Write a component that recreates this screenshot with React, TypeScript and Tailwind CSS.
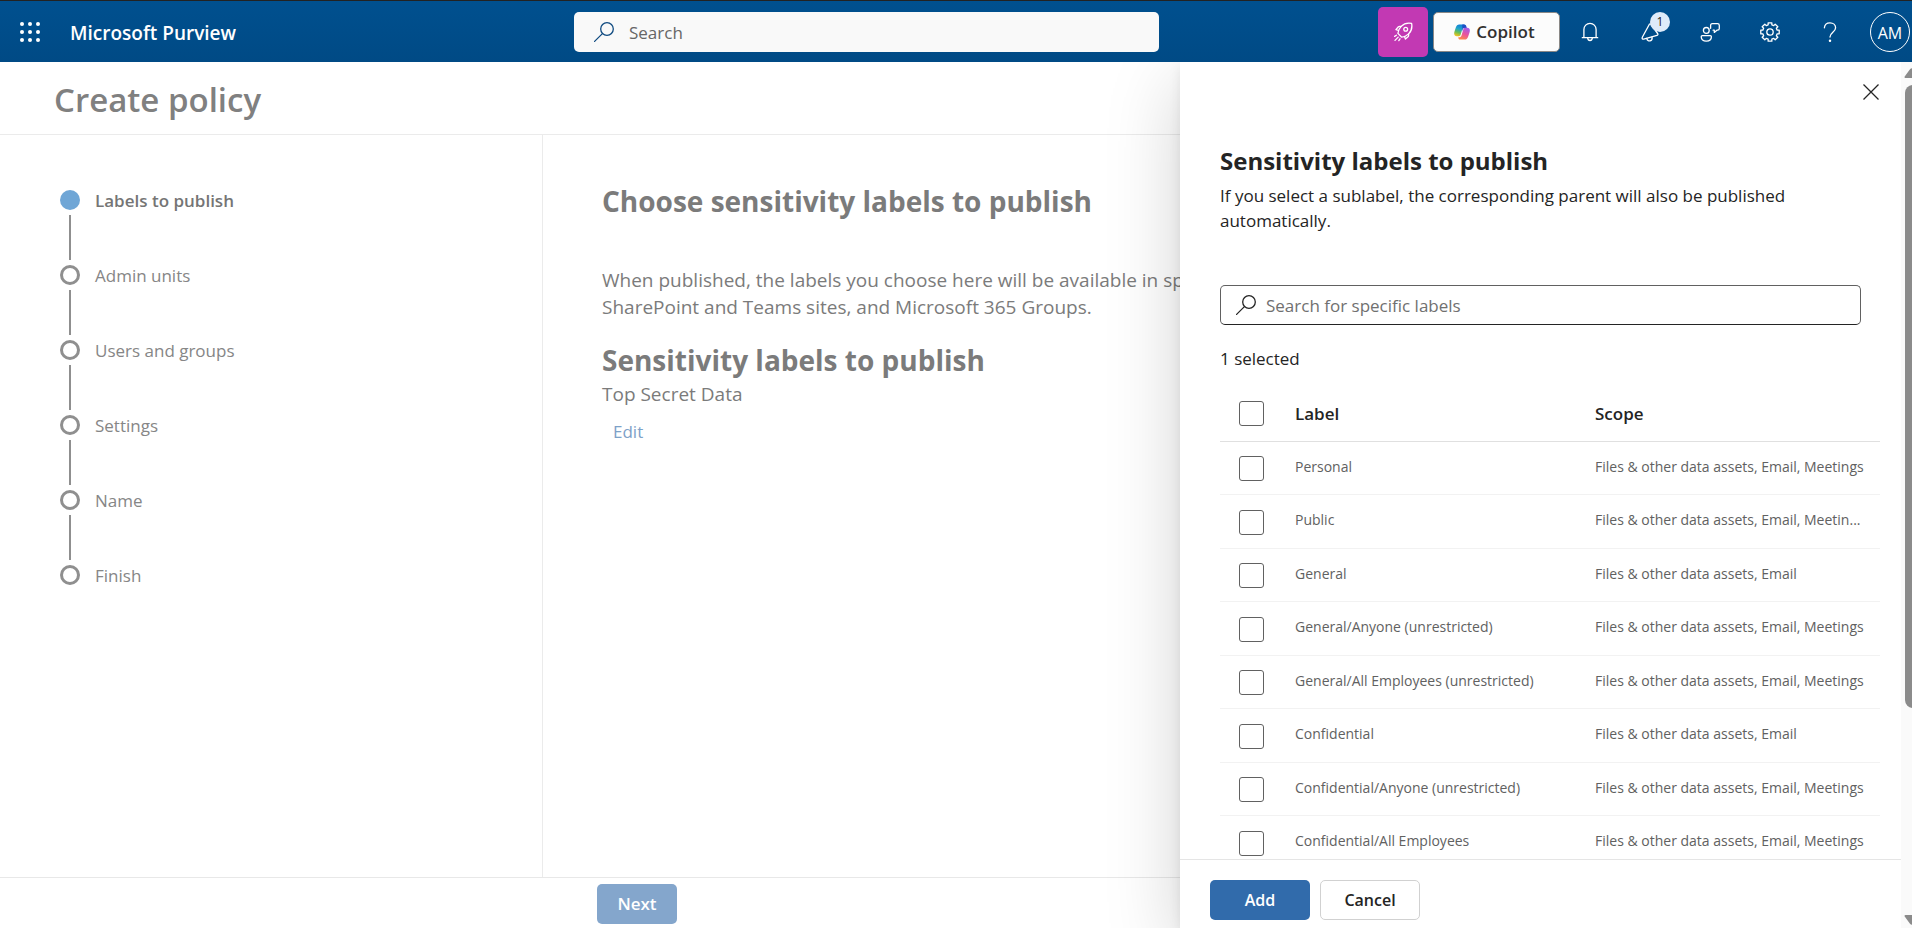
import type { ReactNode } from "react";

const steps = ["Labels to publish", "Admin units", "Users and groups", "Settings", "Name", "Finish"];

const full = "Files & other data assets, Email, Meetings";
const short = "Files & other data assets, Email";

const labels = [
  { name: "Personal", scope: full },
  { name: "Public", scope: "Files & other data assets, Email, Meetin..." },
  { name: "General", scope: short },
  { name: "General/Anyone (unrestricted)", scope: full },
  { name: "General/All Employees (unrestricted)", scope: full },
  { name: "Confidential", scope: short },
  { name: "Confidential/Anyone (unrestricted)", scope: full },
  { name: "Confidential/All Employees", scope: full },
];

function Icon({ children, className = "size-5" }: { children: ReactNode; className?: string }) {
  return (
    <svg
      viewBox="0 0 20 20"
      className={className}
      fill="none"
      stroke="currentColor"
      strokeWidth="1.3"
      strokeLinecap="round"
      strokeLinejoin="round"
      aria-hidden="true"
    >
      {children}
    </svg>
  );
}

function SearchIcon({ className }: { className?: string }) {
  return (
    <Icon className={className}>
      <circle cx="13" cy="7" r="6.3" />
      <path d="M8.4 11.6.6 19.4" />
    </Icon>
  );
}

function WaffleIcon() {
  return (
    <svg viewBox="0 0 20 20" className="size-5" fill="currentColor" aria-hidden="true">
      {[2, 10, 18].map((y) => [2, 10, 18].map((x) => <circle key={`${x}-${y}`} cx={x} cy={y} r="2" />))}
    </svg>
  );
}

function RocketIcon() {
  return (
    <Icon>
      <path d="M18.6 1.4c-4-.8-7.7.2-10.4 3C6.2 6.4 5.1 9 4.9 11.4l3.8 3.8c2.4-.3 5-1.4 6.9-3.3 2.8-2.8 3.8-6.5 3-10.5z" />
      <circle cx="12.7" cy="7.3" r="1.9" />
      <path d="M8.2 4.4H6.6c-.6 0-1 .2-1.4.6L2.9 7.6l2.7.9M15.6 11.9v1.5c0 .6-.2 1-.6 1.4l-2.6 2.3-.9-2.7" />
      <path d="M3.4 13.2 1.6 14.4M5.2 15.1 2 18.4M7 16.8l-1.2 1.8" />
    </Icon>
  );
}

function CopilotIcon() {
  return (
    <svg viewBox="0 0 16 16" className="size-4" aria-hidden="true">
      <defs>
        <linearGradient id="cp-left" x1="0.6" y1="0" x2="0.3" y2="1">
          <stop offset="0" stopColor="#0f7bdc" />
          <stop offset="0.4" stopColor="#21a5c8" />
          <stop offset="0.7" stopColor="#6cbf54" />
          <stop offset="1" stopColor="#f2c21c" />
        </linearGradient>
        <linearGradient id="cp-right" x1="0.7" y1="0" x2="0.3" y2="1">
          <stop offset="0" stopColor="#a35bea" />
          <stop offset="0.5" stopColor="#e8529f" />
          <stop offset="1" stopColor="#ff8a48" />
        </linearGradient>
      </defs>
      <path d="M10 .4H5.3C3.4.4 2.5 1.5 1.8 3.5L.5 7.6C-.4 10.5.5 12.2 2.8 12.2h1.9c1.1 0 1.7-.6 2-1.7l1.8-6c.4-1.2 1-1.8 2.2-1.8h1C11.5 1.4 11 .4 10 .4z" fill="url(#cp-left)" />
      <path d="M8.3.4h1.9c1.2 0 1.8.7 2.1 1.8l.5 1.7h-2.2c-.9 0-1.4.4-1.7 1.3l-.7 2.4z" fill="#1b4fc4" />
      <path d="M6 15.600h4.700c1.900 0 2.800-1.100 3.500-3.100l1.300-4.100c.9-2.900 0-4.600-2.300-4.600h-1.900c-1.100 0-1.700.6-2 1.700l-1.800 6c-.4 1.200-1 1.800-2.200 1.800h-1c-.1 1.300.6 2.300 1.700 2.300z" fill="url(#cp-right)" />
    </svg>
  );
}

function BellIcon() {
  return (
    <Icon>
      <path d="M2.3 15.7h15.4M3.9 15.5V7.6C3.9 4 6.6 1.4 10 1.4s6.1 2.6 6.1 6.2v7.9" />
      <path d="M7.7 16.2c.2 1.5 1.1 2.3 2.3 2.3s2.1-.8 2.3-2.3" />
    </Icon>
  );
}

function MegaphoneIcon() {
  return (
    <Icon>
      <path d="M9.4 2.2 2.3 15.3c-.6 1.1.2 2.1 1.4 1.8L17 13.4c1-.3 1.2-1.2.6-1.900L11 2.300c-.5-.6-1.200-.7-1.600-.1z" />
      <path d="M6.800 16.500c.4 1.800 1.700 2.700 3.300 2.300 1.600-.4 2.300-1.800 1.900-3.700" />
    </Icon>
  );
}

function FeedbackIcon() {
  return (
    <Icon>
      <circle cx="6.3" cy="8.4" r="2.9" />
      <path d="M1.2 14.8c0-.7.4-1.1 1.1-1.1h8c.7 0 1.1.4 1.1 1.1 0 2.7-2 4.3-5.1 4.3s-5.1-1.6-5.1-4.3z" />
      <path d="M10.6 6.3V3.4c0-1 .6-1.7 1.7-1.7h5.3c1.1 0 1.7.7 1.7 1.7v3.1c0 1-.6 1.7-1.7 1.7h-.7l-2.6 2.2V8.2h-1.2" />
    </Icon>
  );
}

const gearPoints = Array.from({ length: 8 }, (_, i) => {
  const base = (i * Math.PI) / 4;
  return [
    [-0.25, 7.4],
    [-0.2, 9.4],
    [0.2, 9.4],
    [0.25, 7.4],
  ]
    .map(([a, r]) => `${(10 + r * Math.sin(base + a)).toFixed(2)},${(10 - r * Math.cos(base + a)).toFixed(2)}`)
    .join(" ");
}).join(" ");

function GearIcon() {
  return (
    <Icon>
      <polygon points={gearPoints} />
      <circle cx="10" cy="10" r="3.2" />
    </Icon>
  );
}

function HelpIcon() {
  return (
    <Icon>
      <path d="M4.4 5.8C4.6 2.8 6.9.8 10 .8s5.6 2.1 5.6 5c0 4.3-5.6 4.7-5.6 9.2" />
      <circle cx="10" cy="18.7" r="0.6" fill="currentColor" />
    </Icon>
  );
}

function HeaderButton({ label, children }: { label: string; children: ReactNode }) {
  return (
    <button type="button" aria-label={label} className="relative flex h-10 w-[60px] items-center justify-center">
      {children}
    </button>
  );
}

function Header() {
  return (
    <header className="flex h-[62px] shrink-0 items-center border-t border-[#222] bg-linear-to-b from-[#00508f] to-[#004a85] pr-0.5 text-white">
      <div className="flex w-[574px] shrink-0 items-center gap-[30px] pl-5">
        <button type="button" aria-label="App launcher">
          <WaffleIcon />
        </button>
        <span className="pt-1 text-[19px] font-semibold">Microsoft Purview</span>
      </div>
      <label className="flex h-10 w-[585px] items-center gap-[15px] rounded-[5px] bg-[#f9f9f9] px-5 text-[#0f4a80]">
        <SearchIcon className="size-5 shrink-0" />
        <input
          type="search"
          aria-label="Search"
          placeholder="Search"
          className="w-full bg-transparent pt-0.5 text-[17px] text-[#333] outline-none placeholder:text-[#666]"
        />
      </label>
      <div className="ml-auto flex items-center">
        <button
          type="button"
          aria-label="What's new"
          className="mr-[5px] flex size-[50px] items-center justify-center rounded-[5px] bg-[#c239b3]"
        >
          <RocketIcon />
        </button>
        <button
          type="button"
          className="flex h-10 w-[127px] items-center justify-center gap-1.5 rounded-[5px] border border-[#8a8886] bg-[#fcfcfc] pr-1 text-[17px] font-semibold text-[#323130]"
        >
          <CopilotIcon />
          Copilot
        </button>
        <HeaderButton label="Notifications">
          <BellIcon />
        </HeaderButton>
        <HeaderButton label="Announcements">
          <MegaphoneIcon />
          <span className="absolute top-0 left-[30px] flex size-5 items-center justify-center rounded-full bg-[#deebfa] text-[12px] text-[#242424]">
            1
          </span>
        </HeaderButton>
        <HeaderButton label="Feedback">
          <FeedbackIcon />
        </HeaderButton>
        <HeaderButton label="Settings">
          <GearIcon />
        </HeaderButton>
        <HeaderButton label="Help">
          <HelpIcon />
        </HeaderButton>
        <button
          type="button"
          aria-label="Account"
          className="ml-2.5 flex size-10 items-center justify-center rounded-full border border-white pt-0.5 text-[16px]"
        >
          AM
        </button>
      </div>
    </header>
  );
}

function Steps() {
  return (
    <nav aria-label="Wizard steps" className="w-[543px] shrink-0 border-r border-[#ebebeb] pt-[55px] pl-[60px]">
      <ol>
        {steps.map((step, i) => (
          <li key={step}>
            {i > 0 && <div className="my-[5px] ml-[9px] h-[45px] w-0.5 bg-[#8f8f8f]" />}
            <div className="flex h-5 items-center gap-[15px]">
              <span
                className={
                  i === 0
                    ? "size-5 rounded-full bg-[#6fa6d6]"
                    : "size-5 rounded-full border-[3px] border-[#8f8f8f]"
                }
              />
              <span
                className={
                  i === 0
                    ? "pt-0.5 text-[17px] font-semibold text-[#757575]"
                    : "pt-0.5 text-[17px] text-[#868686]"
                }
              >
                {step}
              </span>
            </div>
          </li>
        ))}
      </ol>
    </nav>
  );
}

function Checkbox({ label, id }: { label: string; id: string }) {
  return (
    <input
      id={id}
      type="checkbox"
      aria-label={label}
      className="block size-[25px] appearance-none rounded-[3px] border border-[#616161] bg-white"
    />
  );
}

function Panel() {
  return (
    <aside
      role="dialog"
      aria-label="Sensitivity labels to publish"
      className="absolute inset-y-0 right-0 flex w-[732px] bg-white text-[#242424] shadow-[0_20px_70px_rgba(0,0,0,0.18),0_4px_12px_rgba(0,0,0,0.08)]"
    >
      <div className="flex min-w-0 flex-1 flex-col">
        <div className="flex min-h-0 flex-1 flex-col overflow-hidden pl-10">
          <button type="button" aria-label="Close" className="mt-5 mr-5 self-end">
            <svg viewBox="0 0 20 20" className="size-5" stroke="currentColor" strokeWidth="1.3" aria-hidden="true">
              <path d="M2.5 2.5l15 15M17.5 2.5l-15 15" />
            </svg>
          </button>
          <h2 className="mt-11 text-[24px] leading-[30px] font-bold">Sensitivity labels to publish</h2>
          <p className="mt-[7px] mr-10 text-[17px] leading-[25px]">
            If you select a sublabel, the corresponding parent will also be published
            <br />
            automatically.
          </p>
          <label className="mt-[52px] mr-10 flex h-10 shrink-0 items-center gap-2.5 rounded-[5px] border border-[#616161] border-b-[#242424] px-[15px]">
            <SearchIcon className="size-5 shrink-0" />
            <input
              type="search"
              aria-label="Search for specific labels"
              placeholder="Search for specific labels"
              className="w-full bg-transparent pt-0.5 text-[17px] outline-none placeholder:text-[#707070]"
            />
          </label>
          <p className="mt-[22px] text-[17px] leading-6">1 selected</p>
          <table className="mt-[15px] mr-[21px] table-fixed border-collapse text-left">
            <thead>
              <tr className="h-[55px] border-b border-[#e0e0e0] text-[17px]">
                <th className="w-[75px] pl-[19px]">
                  <Checkbox id="all" label="Select all labels" />
                </th>
                <th className="w-[300px] font-semibold">Label</th>
                <th className="font-semibold">Scope</th>
              </tr>
            </thead>
            <tbody>
              {labels.map(({ name, scope }, i) => (
                <tr
                  key={name}
                  className="border-b border-[#f2f2f2] text-[14px] text-[#616161] odd:h-[53px] even:h-[54px]"
                >
                  <td className="pt-0.5 pl-[19px]">
                    <Checkbox id={`label-${i}`} label={name} />
                  </td>
                  <td className="pb-[3px] whitespace-nowrap">
                    <label htmlFor={`label-${i}`}>{name}</label>
                  </td>
                  <td className="pb-[3px] whitespace-nowrap">{scope}</td>
                </tr>
              ))}
            </tbody>
          </table>
        </div>
        <footer className="flex h-[69px] shrink-0 items-start gap-2.5 border-t border-[#e5e5e5] pt-5 pl-[30px] text-[16px] font-semibold">
          <button type="button" className="h-10 w-[100px] rounded-[5px] bg-[#316bab] text-white">
            Add
          </button>
          <button type="button" className="h-10 w-[100px] rounded-[5px] border border-[#d1d1d1] bg-white">
            Cancel
          </button>
        </footer>
      </div>
      <div className="flex w-[11px] shrink-0 flex-col overflow-hidden bg-[#fafafa] pt-1.5 pb-[3px] pl-[3px] text-[#8b8b8b]">
        <svg viewBox="0 0 16 10" className="h-2.5 w-4 shrink-0" fill="currentColor" aria-hidden="true">
          <path d="M1.5 10h13a1 1 0 0 0 .8-1.6L10 1.2a2.5 2.5 0 0 0-4 0L.7 8.4A1 1 0 0 0 1.5 10z" />
        </svg>
        <div className="mt-[7px] ml-px h-[623px] w-4 shrink-0 rounded-[8px] bg-[#8b8b8b]" />
        <svg viewBox="0 0 16 10" className="mt-auto h-2.5 w-4 shrink-0" fill="currentColor" aria-hidden="true">
          <path d="M1.5 0h13a1 1 0 0 1 .8 1.6L10 8.8a2.5 2.5 0 0 1-4 0L.7 1.6A1 1 0 0 1 1.5 0z" />
        </svg>
      </div>
    </aside>
  );
}

export default function App() {
  return (
    <div className="flex h-screen flex-col overflow-hidden bg-white font-['Open_Sans','Noto_Sans',sans-serif]">
      <Header />
      <div className="relative flex min-h-0 flex-1 flex-col overflow-hidden">
        <div className="flex h-[73px] shrink-0 items-center border-b border-[#ebebeb] pl-[54px]">
          <h1 className="pt-1 text-[33px] leading-10 font-semibold text-[#808080]">Create policy</h1>
        </div>
        <div className="flex min-h-0 flex-1">
          <Steps />
          <main className="flex flex-1 flex-col items-start pt-[46px] pl-[59px] text-[#7b7b7b]">
            <h2 className="text-[28px] leading-10 font-bold">Choose sensitivity labels to publish</h2>
            <p className="mt-[46px] text-[19px] leading-[27px] whitespace-nowrap">
              When published, the labels you choose here will be available in specified Office apps,
              <br />
              SharePoint and Teams sites, and Microsoft 365 Groups.
            </p>
            <h3 className="mt-[21px] text-[28px] leading-9 font-bold">Sensitivity labels to publish</h3>
            <p className="mt-1 text-[19px] leading-6">Top Secret Data</p>
            <button type="button" className="mt-[14px] px-[11px] text-[17px] leading-6 text-[#7da1c8]">
              Edit
            </button>
          </main>
        </div>
        <footer className="flex h-[51px] shrink-0 items-start border-t border-[#e8e8e8] pt-1.5 pl-[597px]">
          <button type="button" className="h-10 w-20 rounded-[5px] bg-[#84a6cc] text-[17px] font-semibold text-white">
            Next
          </button>
        </footer>
        <Panel />
      </div>
    </div>
  );
}
